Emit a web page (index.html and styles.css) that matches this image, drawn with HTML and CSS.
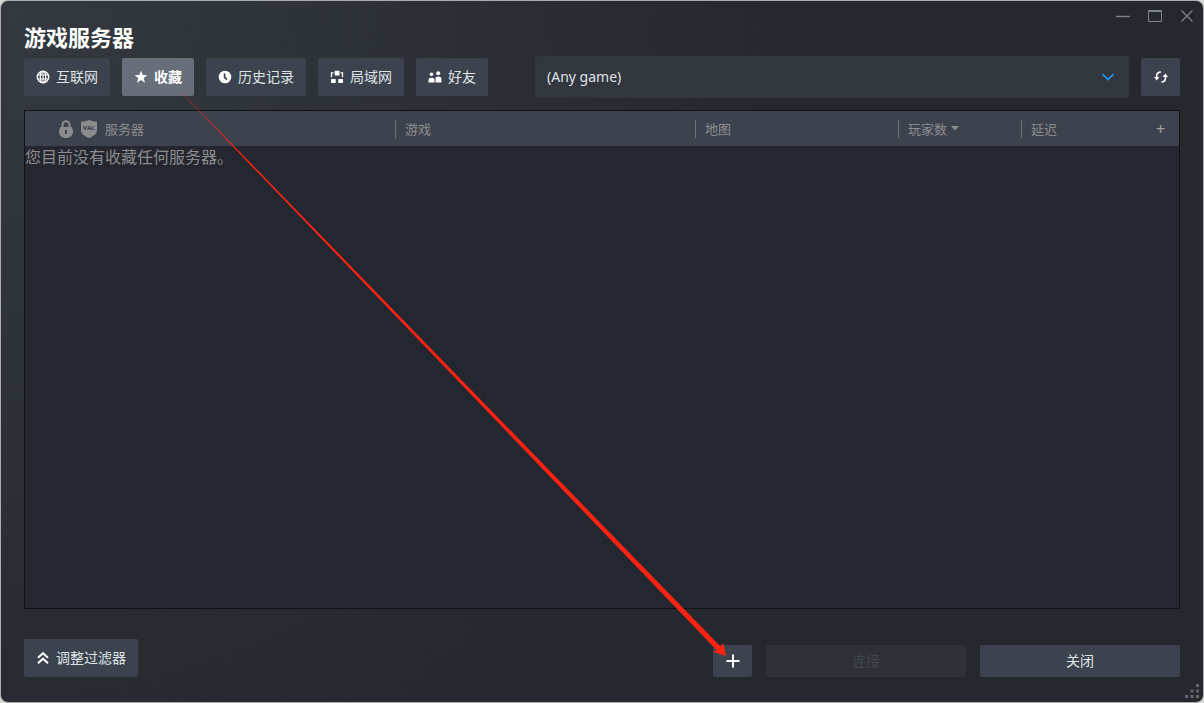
FILE: index.html
```html
<!DOCTYPE html>
<html lang="zh-CN">
<head>
<meta charset="utf-8">
<meta name="viewport" content="width=device-width, initial-scale=1">
<title>游戏服务器</title>
<link rel="stylesheet" href="styles.css">
</head>
<body>
<div class="window">
  <header class="titlebar">
    <h1 class="title">游戏服务器</h1>
    <div class="window-controls">
      <button class="window-button" type="button" aria-label="最小化"><svg width="14" height="14" viewBox="0 0 14 14"><path d="M0 7.5h14" stroke="currentColor" stroke-width="1.4"/></svg></button>
      <button class="window-button" type="button" aria-label="最大化"><svg width="14" height="14" viewBox="0 0 14 14"><path d="M.5 2v10.500h13V2" fill="none" stroke="currentColor"/><path d="M0 1h14v2H0z" fill="currentColor"/></svg></button>
      <button class="window-button" type="button" aria-label="关闭窗口"><svg width="14" height="14" viewBox="0 0 14 14"><path d="M1.500 1.500l11 11M12.500 1.500l-11 11" stroke="currentColor" stroke-width="1.300"/></svg></button>
    </div>
  </header>

  <div class="toolbar">
    <nav class="tabs">
      <button class="button" type="button"><svg class="icon" viewBox="0 0 14 14"><circle cx="7" cy="7" r="5.700" fill="none" stroke="currentColor" stroke-width="1.400"/><ellipse cx="7" cy="7" rx="2.700" ry="5.700" fill="none" stroke="currentColor" stroke-width="1.200"/><path d="M1.500 5h11M1.500 9h11M7 1.500v11" stroke="currentColor" stroke-width="1.100"/></svg>互联网</button>
      <button class="button button-active" type="button"><svg class="icon" viewBox="0 0 14 14"><path d="M7 .7l1.700 4.300 4.700.2-3.700 2.900 1.300 4.600L7 10.100l-4 2.600 1.300-4.600L.6 5.200l4.700-.2z" fill="currentColor"/></svg>收藏</button>
      <button class="button" type="button"><svg class="icon" viewBox="0 0 14 14"><circle cx="7" cy="7" r="6.300" fill="currentColor"/><path d="M6.600 3.500v3.800l2.400 2.200" fill="none" stroke="#3d434d" stroke-width="1.700"/></svg>历史记录</button>
      <button class="button" type="button"><svg class="icon" viewBox="0 0 14 14"><path d="M4.700 .8h4.800v4.700H4.700zM1 9h4.700v4H1zM8.300 9H13v4H8.300z" fill="currentColor"/><path d="M3.600 2.800H1.500v4.400M10.500 2.800h2v4.400" fill="none" stroke="currentColor" stroke-width="1.300"/></svg>局域网</button>
      <button class="button" type="button"><svg class="icon" viewBox="0 0 14 14"><circle cx="3.500" cy="4.200" r="1.800" fill="currentColor"/><circle cx="10.200" cy="3.200" r="2" fill="currentColor"/><path d="M.5 12.500V10C.5 8.400 1.500 7.700 3.500 7.700s3 .7 3 2.300v2.500zM7.500 12.500V8.700c0-1.400 1-2.200 2.900-2.200s3 .8 3 2.200v3.800z" fill="currentColor"/></svg>好友</button>
    </nav>
    <div class="game-filter">
      <select class="game-select" aria-label="游戏"><option>(Any game)</option></select>
      <svg class="chevron" width="14" height="10" viewBox="0 0 14 10"><path d="M1.500 2l5.500 5.500L12.500 2" fill="none" stroke="currentColor" stroke-width="1.600"/></svg>
    </div>
    <button class="button refresh" type="button" aria-label="刷新"><svg class="icon" viewBox="0 0 14 14"><path d="M7 2C4.200 2 2.600 4 2.600 6.500v2M7.500 12c2.500 0 4-2 4-4.500v-2" fill="none" stroke="currentColor" stroke-width="1.600"/><path d="M0 7h5.400L2.800 10.500zM8.600 7H14l-2.600-3.500z" fill="currentColor"/></svg></button>
  </div>

  <main class="server-list">
    <table class="servers">
      <colgroup><col><col class="col-game"><col class="col-map"><col class="col-players"><col class="col-ping"><col class="col-add"></colgroup>
      <thead>
        <tr>
          <th scope="col"><div class="heading heading-server">
            <svg width="14" height="18" viewBox="0 0 14 18"><path d="M3.500 8V4.700a3.500 3.500 0 0 1 7 0V8" fill="none" stroke="currentColor" stroke-width="2"/><path fill-rule="evenodd" d="M1.500 7h11Q14 8.500 14 11.500C14 15.500 11 18 7 18S0 15.500 0 11.500Q0 8.500 1.500 7zM6 10v4h2v-4z" fill="currentColor"/></svg>
            <svg width="16" height="18" viewBox="0 0 16 18"><path d="M0 1.800Q4.500 1.800 8 0q3.500 1.800 8 1.800V10c0 4-4 6.500-8 8-4-1.500-8-4-8-8z" fill="currentColor"/><text class="vac" x="8" y="10" text-anchor="middle">VAC</text></svg>
            <span>服务器</span></div></th>
          <th scope="col"><div class="heading heading-divided">游戏</div></th>
          <th scope="col"><div class="heading heading-divided">地图</div></th>
          <th scope="col" aria-sort="descending"><div class="heading heading-divided">玩家数<svg width="8" height="5" viewBox="0 0 8 5"><path d="M0 0h8L4 4.500z" fill="currentColor"/></svg></div></th>
          <th scope="col"><div class="heading heading-divided">延迟</div></th>
          <th scope="col"><button class="add-column" type="button" aria-label="添加列">+</button></th>
        </tr>
      </thead>
      <tbody><tr><td colspan="6">您目前没有收藏任何服务器。</td></tr></tbody>
    </table>
  </main>

  <footer class="footer">
    <button class="button" type="button"><svg class="icon" viewBox="0 0 14 14"><path d="M2 6.700l5-4.500 5 4.500M2 12.200l5-4.500 5 4.500" fill="none" stroke="currentColor" stroke-width="2"/></svg>调整过滤器</button>
    <div class="actions">
      <button class="button action add-server" type="button" aria-label="添加服务器"><svg class="icon" viewBox="0 0 14 14"><path d="M7 .5v13M.5 7h13" stroke="currentColor" stroke-width="2"/></svg></button>
      <button class="button action action-wide" type="button" disabled>连接</button>
      <button class="button action action-wide" type="button">关闭</button>
    </div>
  </footer>

  <svg class="resize-grip" width="14" height="14" viewBox="0 0 14 14" aria-hidden="true"><path d="M11 0h3v3h-3zM11 5.500h3v3h-3zM5.500 5.500h3v3h-3zM11 11h3v3h-3zM5.500 11h3v3h-3zM0 11h3v3H0z" fill="currentColor"/></svg>
</div>

<svg class="arrow" width="560" height="580" viewBox="180 90 560 580" aria-hidden="true">
  <defs><linearGradient id="fade" gradientUnits="userSpaceOnUse" x1="180" y1="90" x2="250" y2="162"><stop offset="0" stop-color="#ff2112" stop-opacity=".3"/><stop offset="1" stop-color="#ff2112"/></linearGradient></defs>
  <path d="M181.200 92.800L181.800 92.200 720.500 646.500 723.300 643 726 656 712.800 651.800 716.800 650.200z" fill="url(#fade)"/>
</svg>
</body>
</html>
```
FILE: styles.css
```css
* {
  box-sizing: border-box;
}

body {
  margin: 0;
  background: #d5d7d6;
  font-family: "Noto Sans", "Noto Sans CJK SC", sans-serif;
  font-size: 14px;
}

button,
select {
  border: 0;
  font: inherit;
}

svg {
  display: block;
  flex: none;
}

.window {
  position: relative;
  display: flex;
  flex-direction: column;
  min-height: 100vh;
  border: 1px solid #a9adab;
  border-radius: 8px;
  background: radial-gradient(ellipse 65% 120% at top left, #343940, #25282e);
}

.titlebar {
  display: flex;
  justify-content: space-between;
  align-items: flex-start;
  height: 55px;
}

.title {
  margin: 20px 0 0 23px;
  color: #fff;
  font-size: 22px;
  line-height: 32px;
  font-weight: 700;
}

.window-controls {
  display: flex;
}

.window-button {
  display: grid;
  place-items: center;
  width: 32px;
  height: 30px;
  padding: 0;
  background: none;
  color: #788489;
}

.toolbar {
  display: flex;
  align-items: center;
  gap: 12px;
  padding: 0 23px 12px;
}

.tabs {
  display: flex;
  gap: 12px;
  margin-right: 35px;
}

.button {
  display: flex;
  align-items: center;
  justify-content: center;
  gap: 6px;
  height: 38px;
  padding: 0 12px;
  border-radius: 2px;
  background: #3d434e;
  color: #dfe3e6;
  line-height: 20px;
  white-space: nowrap;
}

.button-active {
  background: #686f7a;
  color: #fff;
  font-weight: 700;
}

.icon {
  width: 14px;
  height: 14px;
  color: #fff;
}

.refresh,
.add-server {
  width: 39px;
}

.game-filter {
  position: relative;
  flex: 1;
}

.game-select {
  display: block;
  width: 100%;
  height: 42px;
  padding: 0 12px 2px;
  appearance: none;
  border-radius: 3px;
  background: #32363d;
  color: #dfe3e6;
}

.chevron {
  position: absolute;
  top: 16px;
  right: 14px;
  color: #1a9fff;
  pointer-events: none;
}

.server-list {
  flex: 1;
  margin: 0 23px;
  border: 1px solid #101215;
  background: #24272f;
}

.servers {
  width: 100%;
  table-layout: fixed;
  border-collapse: collapse;
  color: #8b8c8e;
}

.col-game {
  width: 300px;
}

.col-map {
  width: 203px;
}

.col-players {
  width: 123px;
}

.col-ping {
  width: 121px;
}

.col-add {
  width: 37px;
}

.servers th {
  height: 35px;
  padding: 0;
  background: #3d434e;
  font-size: 13px;
  line-height: 16px;
  font-weight: 400;
  text-align: left;
}

.servers td {
  padding: 0;
  font-size: 16px;
  line-height: 22px;
}

.heading {
  display: flex;
  align-items: center;
  gap: 4px;
  height: 18px;
}

.heading-server {
  gap: 8px;
  padding-left: 34px;
}

.heading-divided {
  padding-left: 9px;
  border-left: 1px solid #6b7078;
}

.vac {
  fill: #3d434e;
  font-size: 6px;
  font-weight: 800;
}

.add-column {
  display: block;
  width: 100%;
  padding: 0;
  background: none;
  color: #a0a3a7;
  font-size: 16px;
  text-align: center;
}

.footer {
  display: flex;
  justify-content: space-between;
  align-items: flex-start;
  padding: 30px 23px 25px;
}

.actions {
  display: flex;
  gap: 14px;
  padding-top: 6px;
}

.action {
  height: 32px;
}

.action-wide {
  width: 200px;
}

.action:disabled {
  background: #2e3138;
  color: #40464f;
}

.resize-grip {
  position: absolute;
  right: 4px;
  bottom: 4px;
  color: #63666b;
}

.arrow {
  position: absolute;
  top: 90px;
  left: 180px;
  pointer-events: none;
}
```
